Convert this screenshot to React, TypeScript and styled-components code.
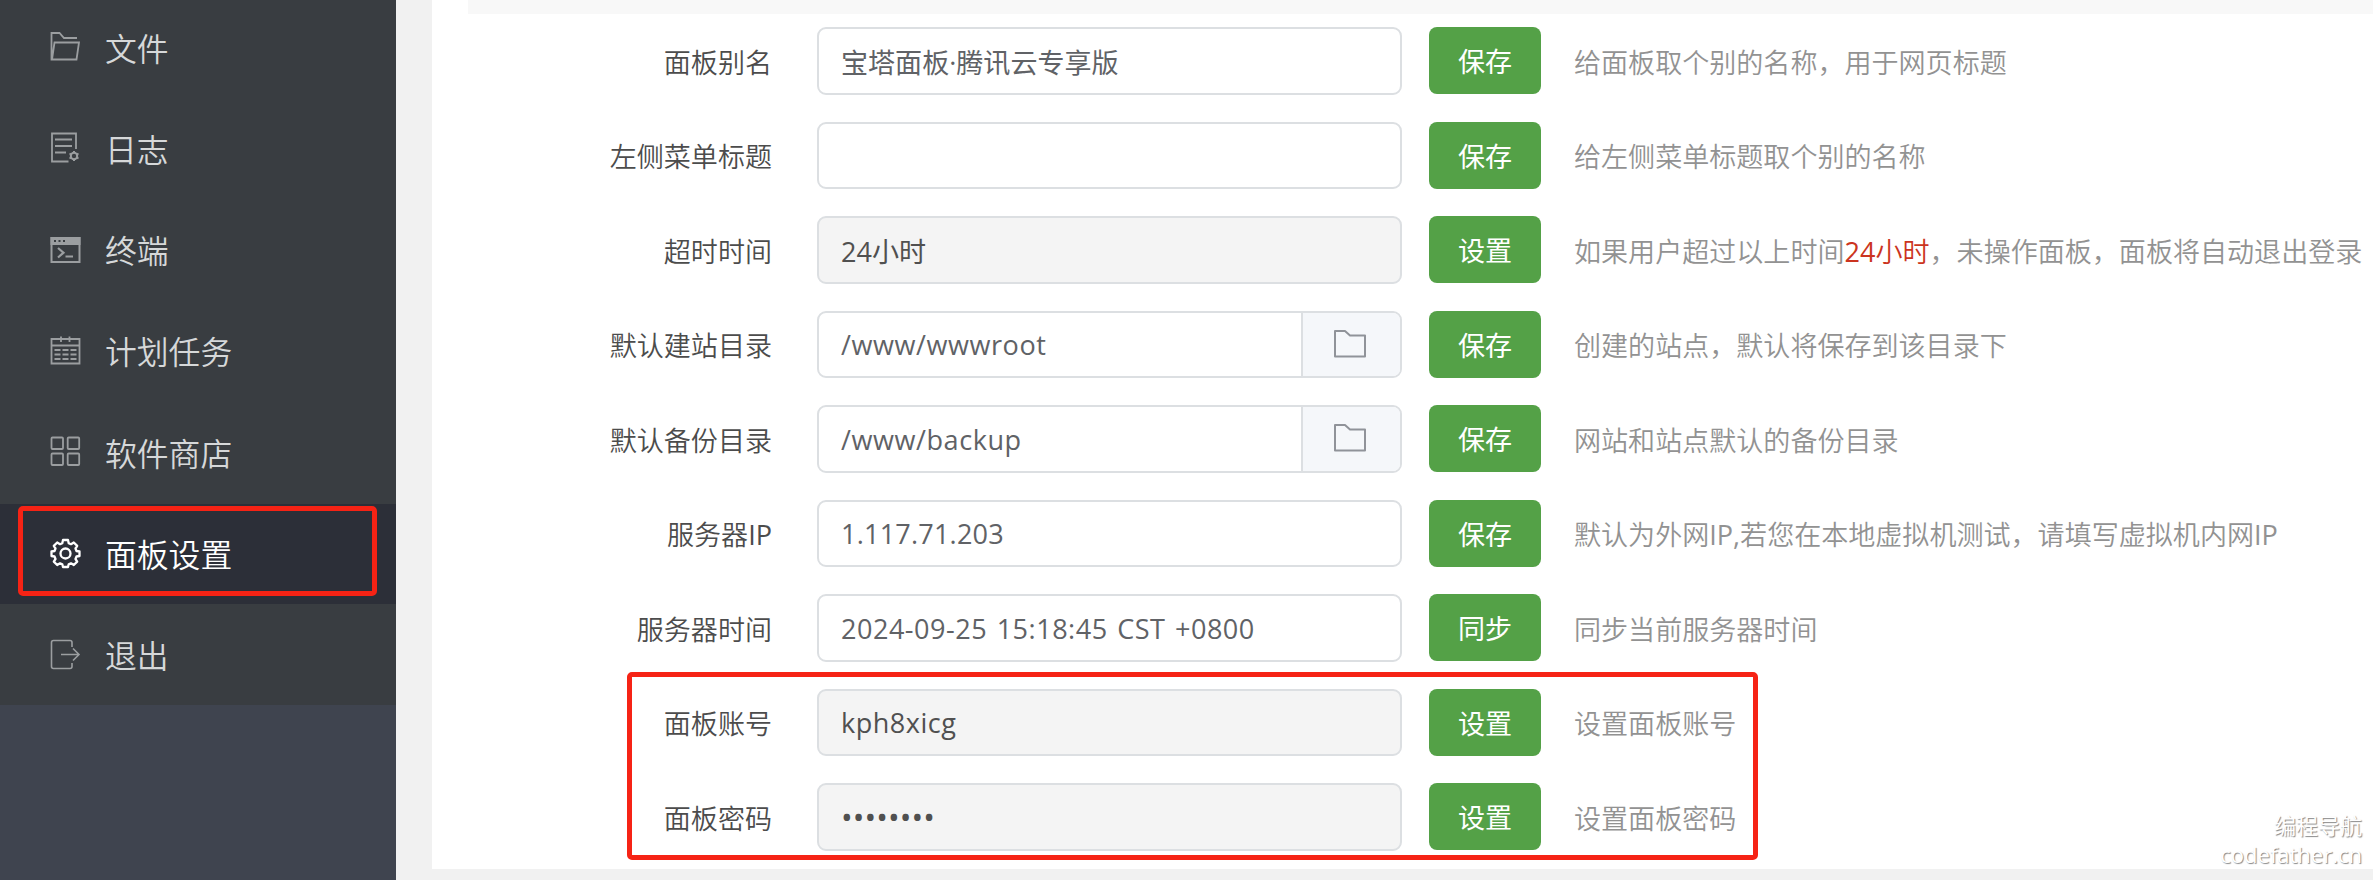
import React from 'react';
import styled, { createGlobalStyle } from 'styled-components';

const Global = createGlobalStyle`
  * { box-sizing: border-box; }
  body {
    margin: 0;
    background: #f1f1f1;
    font-family: "Open Sans", "Noto Sans CJK SC", sans-serif;
  }
`;

const Page = styled.div`
  position: relative;
  display: flex;
  width: 2373px;
  height: 880px;
  overflow: hidden;
  background: #f1f1f1;
`;

const Sidebar = styled.nav`
  position: relative;
  flex: none;
  width: 396px;
  background: #3f444f;
`;

const Menu = styled.ul`
  list-style: none;
  margin: 0;
  padding: 0;
  height: 705px;
  background: #393d41;
  display: flex;
  flex-direction: column;
  justify-content: flex-end;
  gap: 2px;
`;

const MenuItem = styled.li<{ $active?: boolean }>`
  flex: none;
  display: flex;
  align-items: center;
  gap: 24px;
  height: 99.3px;
  padding: 0 0 2px 50px;
  font-size: 31.8px;
  line-height: 40px;
  color: ${(p) => (p.$active ? '#fff' : '#d6d8d9')};
  background: ${(p) => (p.$active ? '#2c2f38' : 'transparent')};
  font-family: "Noto Sans CJK SC", sans-serif;
  font-weight: 350;

  svg {
    flex: none;
    color: ${(p) => (p.$active ? '#fff' : '#9b9ea0')};
  }
`;

const Highlight = styled.div<{ $x: number; $y: number; $w: number; $h: number }>`
  position: absolute;
  left: ${(p) => p.$x}px;
  top: ${(p) => p.$y}px;
  width: ${(p) => p.$w}px;
  height: ${(p) => p.$h}px;
  border: 5px solid #f62315;
  border-radius: 5px;
  pointer-events: none;
`;

const Panel = styled.main`
  flex: 1;
  margin: 0 0 11px 36px;
  background: #fff;
`;

const SectionBar = styled.div`
  height: 14px;
  margin-left: 36px;
  background: #f8f8f8;
`;

const Form = styled.div`
  display: flex;
  flex-direction: column;
  padding-top: 13px;
  gap: 27px;
`;

const Row = styled.div`
  display: flex;
  align-items: center;
  height: 67.5px;
  font-size: 27.05px;
  white-space: nowrap;
`;

const Label = styled.label`
  flex: none;
  width: 340px;
  margin-right: 45px;
  padding-top: 4px;
  text-align: right;
  line-height: 40px;
  font-weight: 350;
  color: #4c4c4c;
`;

const Field = styled.div<{ $disabled?: boolean }>`
  flex: none;
  display: flex;
  width: 585px;
  height: 67.5px;
  margin-right: 27px;
  border: 2px solid #dcdfe2;
  border-radius: 9px;
  background: ${(p) => (p.$disabled ? '#f4f4f4' : '#fff')};
  overflow: hidden;
`;

const Input = styled.input<{ $spacing?: number; $size?: number }>`
  flex: 1;
  min-width: 0;
  height: 100%;
  padding: 1px 22px 0;
  border: 0;
  outline: 0;
  background: transparent;
  font: inherit;
  font-weight: ${(p) => (p.$spacing ? 400 : 370)};
  font-size: ${(p) => p.$size ?? 27.05}px;
  letter-spacing: ${(p) => p.$spacing ?? 0}px;
  word-spacing: 2px;
  color: ${(p) => (p.disabled ? '#505050' : '#606266')};
`;

const Browse = styled.button`
  width: 99px;
  border: 0;
  border-left: 2px solid #dcdfe2;
  padding: 0 3px 1px 0;
  background: #f5f7fa;
  color: #909399;
  display: flex;
  align-items: center;
  justify-content: center;
`;

const Action = styled.button`
  flex: none;
  width: 112px;
  height: 67px;
  margin-right: 33px;
  padding: 0;
  border: 0;
  border-radius: 8px;
  background: #54a147;
  color: #fff;
  font: inherit;
  font-weight: 370;
`;

const Hint = styled.span`
  padding-top: 4px;
  line-height: 40px;
  font-weight: 350;
  color: #929292;
`;

const Warn = styled.span`
  color: #cb3420;
`;

const Latin = styled.span`
  font-weight: 400;
`;

const Watermark = styled.div`
  position: absolute;
  right: 11px;
  bottom: 11px;
  text-align: right;
  font-size: 22px;
  line-height: 29px;
  color: #fff;
  text-shadow: 1px 1px 1px #888;
`;

const Icon = ({ children, sw = 1.6 }: { children: React.ReactNode; sw?: number }) => (
  <svg width="31" height="31" viewBox="0 0 31 31" fill="none" stroke="currentColor" strokeWidth={sw}>
    {children}
  </svg>
);

const FilesIcon = () => (
  <Icon sw={1.8}>
    <path d="M2.500 28.500H1.500V2h8l4.500 5H27M2 28.500 4.500 11.500H29L26.500 28.500Z" />
  </Icon>
);

const LogIcon = () => (
  <Icon sw={1.8}>
    <path d="M26 17V1.500H2V29.500H18.500M5 7.500H22M5 14H22M5 20.500H16" />
    <circle cx="24" cy="24" r="3.200" strokeWidth="2" />
    <path strokeWidth="2" d="M24 19v2M24 27v2M19.500 21.500l1.700 1M26.800 25.500l1.700 1M19.500 26.500l1.700-1M26.800 22.500l1.700-1" />
  </Icon>
);

const TerminalIcon = () => (
  <Icon sw={2}>
    <path d="M1.500 4h28v24h-28z" />
    <path d="M.5 3h30v8H.5z" fill="currentColor" stroke="none" />
    <path d="M4 7h2M8.500 7h2M13 7h2" stroke="#393d41" />
    <path d="M8 14l5.500 4.700L8 23.500M15.500 22.500h7.500" strokeWidth="2.200" />
  </Icon>
);

const CalendarIcon = () => (
  <Icon sw={1.8}>
    <path d="M1.500 4h28v24.500h-28zM1.500 10.500h28M11 1.500v5.500M19.500 1.500v5.500" />
    <path d="M4.500 15h6M12.500 15h6M20.500 15h6M4.500 19.500h6M12.500 19.500h6M20.500 19.500h6M4.500 24h6M12.500 24h6M20.500 24h6" />
  </Icon>
);

const StoreIcon = () => (
  <Icon sw={1.8}>
    <rect x="1.500" y="1.500" width="11.500" height="11.500" rx="1" />
    <rect x="17.700" y="1.500" width="11.500" height="11.500" rx="1" />
    <rect x="1.500" y="17.500" width="11.500" height="11.500" rx="1" />
    <rect x="17.700" y="17.500" width="11.500" height="11.500" rx="1" />
  </Icon>
);

const GearIcon = () => (
  <Icon sw={2.3}>
    <path
      strokeLinejoin="round"
      d="M12.300 5.200 13 2h5l.7 3.200 2.300 1L23.800 4.500l3.400 3.400L25.500 10.500l1 2.500 3 .5v4.500l-3 .5-1 2.500 1.700 2.600-3.400 3.400L21 25.300l-2.300 1L18 29h-5l-.7-2.700-2.300-1-2.800 1.700-3.400-3.400L5.500 21l-1-2.500L1.500 18v-4.500l3-.5 1-2.500L3.800 7.900 7.200 4.500 10 6.200Z"
    />
    <circle cx="15.500" cy="15.500" r="5" />
  </Icon>
);

const ExitIcon = () => (
  <Icon>
    <path d="M22 8V3.500q0-2-2-2H3.500q-2 0-2 2v24q0 2 2 2H20q2 0 2-2V24M11 15.500H29M23 9.500l6 6-6 6" />
  </Icon>
);

const FolderIcon = () => (
  <svg width="34" height="30" viewBox="0 0 34 30" fill="none" stroke="currentColor" strokeWidth="2">
    <path d="M2 2H12l5 4.500H32V27.500H2Z" strokeLinejoin="round" />
  </svg>
);

const menu = [
  { text: '文件', icon: <FilesIcon /> },
  { text: '日志', icon: <LogIcon /> },
  { text: '终端', icon: <TerminalIcon /> },
  { text: '计划任务', icon: <CalendarIcon /> },
  { text: '软件商店', icon: <StoreIcon /> },
  { text: '面板设置', icon: <GearIcon />, active: true },
  { text: '退出', icon: <ExitIcon /> },
];

type Setting = {
  label: React.ReactNode;
  value: string;
  action: string;
  hint: React.ReactNode;
  spacing?: number;
  size?: number;
  disabled?: boolean;
  browse?: boolean;
};

const settings: Setting[] = [
  { label: '面板别名', value: '宝塔面板·腾讯云专享版', action: '保存', hint: '给面板取个别的名称，用于网页标题' },
  { label: '左侧菜单标题', value: '', action: '保存', hint: '给左侧菜单标题取个别的名称' },
  {
    label: '超时时间',
    value: '24小时',
    action: '设置',
    disabled: true,
    hint: (
      <>
        如果用户超过以上时间<Warn><Latin>24</Latin>小时</Warn>，未操作面板，面板将自动退出登录
      </>
    ),
  },
  { label: '默认建站目录', value: '/www/wwwroot', action: '保存', spacing: 0.55, hint: '创建的站点，默认将保存到该目录下', browse: true },
  { label: '默认备份目录', value: '/www/backup', action: '保存', spacing: 0.55, hint: '网站和站点默认的备份目录', browse: true },
  {
    label: <>服务器<Latin>IP</Latin></>,
    value: '1.117.71.203',
    action: '保存',
    spacing: 0.2,
    hint: <>默认为外网<Latin>IP,</Latin>若您在本地虚拟机测试，请填写虚拟机内网<Latin>IP</Latin></>,
  },
  { label: '服务器时间', value: '2024-09-25 15:18:45 CST +0800', action: '同步', hint: '同步当前服务器时间', spacing: 0.5 },
  { label: '面板账号', value: 'kph8xicg', action: '设置', hint: '设置面板账号', disabled: true, spacing: 0.5 },
  { label: '面板密码', value: '••••••••', action: '设置', hint: '设置面板密码', disabled: true, size: 31, spacing: 0.1 },
];

export default function App() {
  return (
    <Page>
      <Global />
      <Sidebar>
        <Menu>
          {menu.map((m) => (
            <MenuItem key={m.text} $active={m.active}>
              {m.icon}
              {m.text}
            </MenuItem>
          ))}
        </Menu>
        <Highlight $x={17.5} $y={506} $w={359} $h={90} />
      </Sidebar>
      <Panel>
        <SectionBar />
        <Form>
          {settings.map((s, i) => (
            <Row key={i}>
              <Label>{s.label}</Label>
              <Field $disabled={s.disabled}>
                <Input defaultValue={s.value} disabled={s.disabled} $spacing={s.spacing} $size={s.size} />
                {s.browse && (
                  <Browse>
                    <FolderIcon />
                  </Browse>
                )}
              </Field>
              <Action>{s.action}</Action>
              <Hint>{s.hint}</Hint>
            </Row>
          ))}
        </Form>
      </Panel>
      <Highlight $x={626.5} $y={672} $w={1131} $h={188} />
      <Watermark>
        编程导航
        <br />
        codefather.cn
      </Watermark>
    </Page>
  );
}
